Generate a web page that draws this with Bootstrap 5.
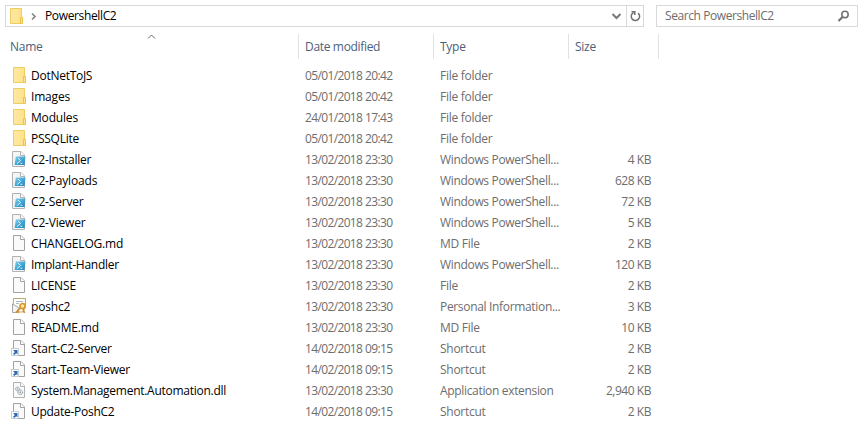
<!DOCTYPE html>
<html lang="en">
<head>
<meta charset="utf-8">
<title>PowershellC2</title>
<link href="https://cdn.jsdelivr.net/npm/bootstrap@5.3.0/dist/css/bootstrap.min.css" rel="stylesheet">
<style>
body{font:12px/16px "Open Sans","Noto Sans",sans-serif;background:#fff;color:#000;overflow:hidden}
svg{display:block;flex:none}
.topbar{padding:5px 9px 0 5px;gap:12px}
.box{height:22px;border:1px solid #d9d9d9}
.address{width:639px;padding-left:4px}
.refresh{width:17px;height:20px;border-left:1px solid #d9d9d9;padding-left:3px}
.search{width:202px;color:#6d6d6d;padding:0 7px 0 8px}
.search-hint{letter-spacing:-.42px}
.crumb{letter-spacing:-.36px;margin-left:7px}
.cols{display:grid;grid-template-columns:299px 135px 135px 90px}
.heads{margin-top:7px;height:25px;color:#4c607a}
.heads>div{border-right:1px solid #e2e2e2;padding:5px 0 0 6px;position:relative}
.heads>div:first-child{padding-left:10px;letter-spacing:-.25px}
.sort{position:absolute;left:147px;top:0}
.files{margin-top:6px}
.file-row{height:21px;align-items:center;color:#6d6d6d}
.file-name{color:#000;padding-left:11px;gap:3px}
.cell{padding-left:6px}
.size{padding-right:8px;text-align:right;letter-spacing:-.46px}
.date{letter-spacing:-.64px;word-spacing:.3px}
.t1{letter-spacing:-.18px}.t2{letter-spacing:-.27px}.t3{letter-spacing:-.33px}
</style>
<script src="https://cdn.jsdelivr.net/npm/bootstrap@5.3.0/dist/js/bootstrap.bundle.min.js"></script>
</head>
<body>
<svg width="0" height="0" class="position-absolute">
<defs>
<linearGradient id="fg" x2="1"><stop stop-color="#ffe9a2"/><stop offset="1" stop-color="#ffe08a"/></linearGradient>
<linearGradient id="bg" x2="1" y2="1"><stop stop-color="#7fd0ee"/><stop offset="1" stop-color="#1482bd"/></linearGradient>
<symbol id="folder" viewBox="0 0 17 17"><path d="M2.500 .5h11v9.500h1v5.500h-12z" fill="url(#fg)" stroke="#efcd62"/><path d="M12.500 9.500h2v6h-2z" fill="#ffe391" stroke="#ebc44c"/></symbol>
<symbol id="page" viewBox="0 0 17 17"><path d="M2.500 .5h7.500l3.500 3.500v11.500h-11z" fill="#fafafa" stroke="#a2a2a2"/><path d="M9.500 .5v4h4" fill="#fff" stroke="#a2a2a2"/></symbol>
<symbol id="ps" viewBox="0 0 17 17"><path d="M1.500 .5h8.500l3.500 3.500v11.500h-12z" fill="#f5f5f5" stroke="#b2b2b2"/><path d="M9.500 .5v4h4" fill="#fff" stroke="#b2b2b2"/><path d="M4.800 5.500h9.700l-1 8.500H3.500z" fill="url(#bg)"/><path d="M7 7l2.500 2.600-3.500 3M9.500 12.300h2" fill="none" stroke="#dff5ff"/></symbol>
<symbol id="lnk" viewBox="0 0 17 17"><path d="M2.500 .5h7.500l3.500 3.500v11.500h-11z" fill="#fafafa" stroke="#a2a2a2"/><path d="M9.500 .5v4h4" fill="#fff" stroke="#a2a2a2"/><path d="M.5 8.500h7v7h-7z" fill="#fff" stroke="#c4cbd3"/><path d="M2 10h4.500v4.500L5.200 13.200 3.200 15 2 13.800l1.900-1.900z" fill="#2867b2"/></symbol>
<symbol id="dll" viewBox="0 0 17 17"><path d="M2.500 .5h7.500l3.500 3.500v11.500h-11z" fill="#fafafa" stroke="#b2b2b2"/><path d="M9.500 .5v4h4" fill="#fff" stroke="#b2b2b2"/><g fill="#e3e8eb"><circle cx="6.500" cy="7" r="2" stroke="#8e9ba4" stroke-dasharray="1.300 .6"/><circle cx="9.300" cy="10.300" r="2.400" stroke="#8e9ba4" stroke-dasharray="1.300 .6"/></g><g fill="#8c99a2"><circle cx="6.500" cy="7" r=".7"/><circle cx="9.300" cy="10.300" r=".8"/></g></symbol>
<symbol id="cert" viewBox="0 0 17 17"><path d="M2.500 .5h12v9l-3 4.500h-9.500z" fill="#fffdf5" stroke="#b9a583"/><path d="M1.500 6l6 3.500-1 5h-5z" fill="#f1f3f5" stroke="#a6a6a6"/><path d="M5 3.500h7M5 5.500h3" stroke="#a9b7cc"/><circle cx="11.500" cy="8" r="2.500" fill="#ffe9a8" stroke="#d9992f" stroke-width="1.700"/><path d="M9.500 10L5 14.500M6.500 13l1.500 1.500M12 11l1.500 4" stroke="#cf8c24" stroke-width="1.700"/></symbol>
</defs>
</svg>

<header class="topbar d-flex">
  <div class="box address d-flex align-items-center">
    <svg width="17" height="17" class="me-1"><use href="#folder" x="-2"/></svg>
    <svg width="7" height="9" viewBox="0 0 7 9" fill="none" stroke="#858585" stroke-width="1.700"><path d="M1 1.500l3 3-3 3"/></svg>
    <span class="crumb">PowershellC2</span>
    <svg width="11" height="8" viewBox="0 0 11 8" class="ms-auto" fill="none" stroke="#787878" stroke-width="2"><path d="M1.500 2l4 4 4-4"/></svg>
    <div class="refresh ms-1 d-flex align-items-center"><svg width="11" height="12" viewBox="0 0 11 12" fill="none" stroke="#707070" stroke-width="1.500"><path d="M3.500 2.600a4.200 4.200 0 1 0 4.600.5"/><path d="M1.500 1.700h3.300v3.400"/></svg></div>
  </div>
  <div class="box search d-flex align-items-center justify-content-between">
    <span class="search-hint">Search PowershellC2</span>
    <svg width="13" height="12" viewBox="0 0 13 12" fill="none" stroke="#707070"><circle cx="8" cy="4.500" r="3.200" stroke-width="1.500"/><path d="M5.500 7L1.500 11" stroke-width="2.200"/></svg>
  </div>
</header>

<div class="cols heads">
  <div>Name<svg class="sort" width="9" height="6" viewBox="0 0 9 6" fill="none" stroke="#666"><path d="M1 4.500L4.500 1 8 4.500"/></svg></div>
  <div class="t3">Date modified</div>
  <div class="t2">Type</div>
  <div class="t2">Size</div>
</div>

<main class="files" id="files"></main>

<script>
const files = [
  ["folder","DotNetToJS","05/01/2018 20:42","File folder","",2],
  ["folder","Images","05/01/2018 20:42","File folder","",1],
  ["folder","Modules","24/01/2018 17:43","File folder","",1],
  ["folder","PSSQLite","05/01/2018 20:42","File folder","",2],
  ["ps","C2-Installer","13/02/2018 23:30","Windows PowerShell...","4 KB",2],
  ["ps","C2-Payloads","13/02/2018 23:30","Windows PowerShell...","628 KB",1],
  ["ps","C2-Server","13/02/2018 23:30","Windows PowerShell...","72 KB",1],
  ["ps","C2-Viewer","13/02/2018 23:30","Windows PowerShell...","5 KB",1],
  ["page","CHANGELOG.md","13/02/2018 23:30","MD File","2 KB",1],
  ["ps","Implant-Handler","13/02/2018 23:30","Windows PowerShell...","120 KB",2],
  ["page","LICENSE","13/02/2018 23:30","File","2 KB",1],
  ["cert","poshc2","13/02/2018 23:30","Personal Information...","3 KB",1],
  ["page","README.md","13/02/2018 23:30","MD File","10 KB",1],
  ["lnk","Start-C2-Server","14/02/2018 09:15","Shortcut","2 KB",2],
  ["lnk","Start-Team-Viewer","14/02/2018 09:15","Shortcut","2 KB",2],
  ["dll","System.Management.Automation.dll","13/02/2018 23:30","Application extension","2,940 KB",2],
  ["lnk","Update-PoshC2","14/02/2018 09:15","Shortcut","2 KB",2]
];
document.getElementById("files").innerHTML = files.map(([icon,name,date,type,size,t]) =>
  `<div class="cols file-row"><div class="file-name d-flex align-items-center t${t}"><svg width="17" height="17"><use href="#${icon}"/></svg><span>${name}</span></div>
  <div class="cell date">${date}</div><div class="cell ${type.length > 12 ? "t3" : "t2"}">${type}</div><div class="size">${size}</div></div>`).join("");
</script>
</body>
</html>
